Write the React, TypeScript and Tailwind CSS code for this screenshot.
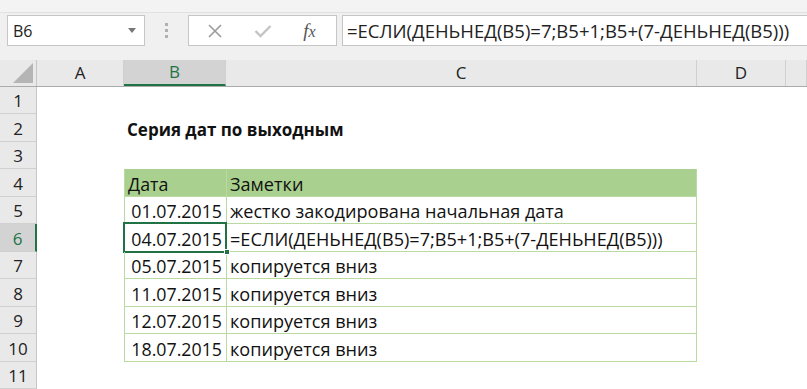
import React from "react";

const cols = [
  { key: "A", w: "w-[87px]" },
  { key: "B", w: "w-[102px]" },
  { key: "C", w: "w-[471px]" },
  { key: "D", w: "w-[89px]" },
  { key: "", w: "flex-1" },
];

const formula = "=ЕСЛИ(ДЕНЬНЕД(B5)=7;B5+1;B5+(7-ДЕНЬНЕД(B5)))";

const rows = [
  { n: 1, h: "h-[27px]" },
  { n: 2, h: "h-[28px]", title: "Серия дат по выходным" },
  { n: 3, h: "h-[27px]" },
  { n: 4, h: "h-[28px]", head: true, b: "Дата", c: "Заметки" },
  { n: 5, h: "h-[27px]", b: "01.07.2015", c: "жестко закодирована начальная дата" },
  { n: 6, h: "h-[28px]", b: "04.07.2015", c: formula, active: true },
  { n: 7, h: "h-[27px]", b: "05.07.2015", c: "копируется вниз" },
  { n: 8, h: "h-[28px]", b: "11.07.2015", c: "копируется вниз" },
  { n: 9, h: "h-[27px]", b: "12.07.2015", c: "копируется вниз" },
  { n: 10, h: "h-[28px]", b: "18.07.2015", c: "копируется вниз" },
  { n: 11, h: "h-[27px]" },
];

function FormulaBar() {
  return (
    <div className="h-[60px] bg-[#f0f0f0] flex flex-col">
      <div className="h-[13px] bg-[#f3f3f3] border-b border-[#e1e1e1]" />
      <div className="flex items-start pt-[2px]">
        <div className="ml-[7px] w-[138px] h-[31px] bg-white border border-[#c6c6c6] flex items-center justify-between pl-[5px] pr-[8px]">
          <span className="text-[16px] text-[#222]">B6</span>
          <svg width="8" height="5" viewBox="0 0 8 5">
            <path d="M0 0 L8 0 L4 5 Z" fill="#777" />
          </svg>
        </div>
        <div className="w-[43px] h-[31px] flex flex-col items-center justify-center gap-[3px]">
          <span className="w-[3px] h-[3px] bg-[#b0b0b0]" />
          <span className="w-[3px] h-[3px] bg-[#b0b0b0]" />
          <span className="w-[3px] h-[3px] bg-[#b0b0b0]" />
        </div>
        <div className="w-[149px] h-[31px] bg-white border border-[#c6c6c6] flex items-center">
          <div className="w-[50px] flex justify-center pl-[2px]">
            <svg width="16" height="16" viewBox="0 0 16 16">
              <path d="M2 2 L14 14 M14 2 L2 14" stroke="#9a9a9a" strokeWidth="1.6" />
            </svg>
          </div>
          <div className="w-[48px] flex justify-center">
            <svg width="18" height="14" viewBox="0 0 18 14">
              <path d="M1.5 7 L6.5 12 L16.5 2" stroke="#c4c4c4" strokeWidth="2.4" fill="none" />
            </svg>
          </div>
          <div className="flex-1 flex justify-center pr-[4px]">
            <span className="text-[19px] italic text-[#555] leading-none" style={{ fontFamily: '"Liberation Serif", serif' }}>
              f<span className="text-[16px]">x</span>
            </span>
          </div>
        </div>
        <div className="ml-[5px] flex-1 h-[31px] bg-white border border-[#c6c6c6] border-r-0 flex items-center pl-[4px]">
          <span className="text-[18.5px] text-[#222] whitespace-nowrap">{formula}</span>
        </div>
      </div>
    </div>
  );
}

function ColumnHeader() {
  return (
    <div className="flex h-[27px] bg-[#e9e9e9] border-b border-[#ababab]">
      <div className="w-[37px] relative border-r border-[#c6c6c6]">
        <svg className="absolute right-[3px] bottom-[3px]" width="20" height="20" viewBox="0 0 20 20">
          <path d="M20 0 L20 20 L0 20 Z" fill="#b5b5b5" />
        </svg>
      </div>
      {cols.map((c) => (
        <div
          key={c.w}
          className={`${c.w} flex items-center justify-center text-[17px] border-r border-[#d0d0d0] ${
            c.key === "B" ? "bg-[#d3d3d3] text-[#217346] border-b-2 border-b-[#217346]" : "text-[#222]"
          }`}
        >
          {c.key}
        </div>
      ))}
    </div>
  );
}

export default function App() {
  return (
    <div
      className="w-[807px] h-[389px] overflow-hidden bg-white text-[#111]"
      style={{ fontFamily: '"Open Sans", "Noto Sans", sans-serif' }}
    >
      <FormulaBar />
      <ColumnHeader />
      {rows.map((r) => (
        <div key={r.n} className={`flex ${r.h}`}>
          <div
            className={`w-[37px] shrink-0 flex items-end justify-center text-[17px] leading-[24px] border-b border-[#d0d0d0] ${
              r.active
                ? "bg-[#d3d3d3] text-[#217346] border-r-2 border-r-[#217346]"
                : "bg-[#e9e9e9] text-[#222] border-r border-r-[#c6c6c6]"
            }`}
          >
            {r.n}
          </div>
          <div className="w-[87px]" />
          {r.title ? (
            <div className="flex-1 flex items-end pl-[3px] text-[17px] font-bold leading-[24px] whitespace-nowrap">
              {r.title}
            </div>
          ) : r.b ? (
            <>
              <div
                className={`relative w-[102px] flex items-end text-[17.8px] leading-[24px] whitespace-nowrap border-l border-b border-[#b9dba2] ${
                  r.head ? "bg-[#a9d08e] justify-start pl-[3px]" : "justify-end pr-[4px]"
                } ${r.n === 4 ? "border-t border-t-[#a9d08e]" : ""}`}
              >
                {r.active && (
                  <>
                    <div className="absolute left-[-2px] top-[-2px] right-[-1px] bottom-[-2px] border-2 border-[#217346]" />
                    <div className="absolute right-[-4px] bottom-[-4px] w-[6px] h-[6px] bg-[#217346] border border-white" />
                  </>
                )}
                {r.b}
              </div>
              <div
                className={`w-[471px] flex items-end pl-[3px] text-[18.1px] leading-[24px] whitespace-nowrap border-l border-r border-b border-[#b9dba2] ${
                  r.head ? "bg-[#a9d08e]" : ""
                } ${r.n === 4 ? "border-t border-t-[#a9d08e]" : ""}`}
              >
                {r.c}
              </div>
              <div className="flex-1" />
            </>
          ) : (
            <div className="flex-1" />
          )}
        </div>
      ))}
    </div>
  );
}
